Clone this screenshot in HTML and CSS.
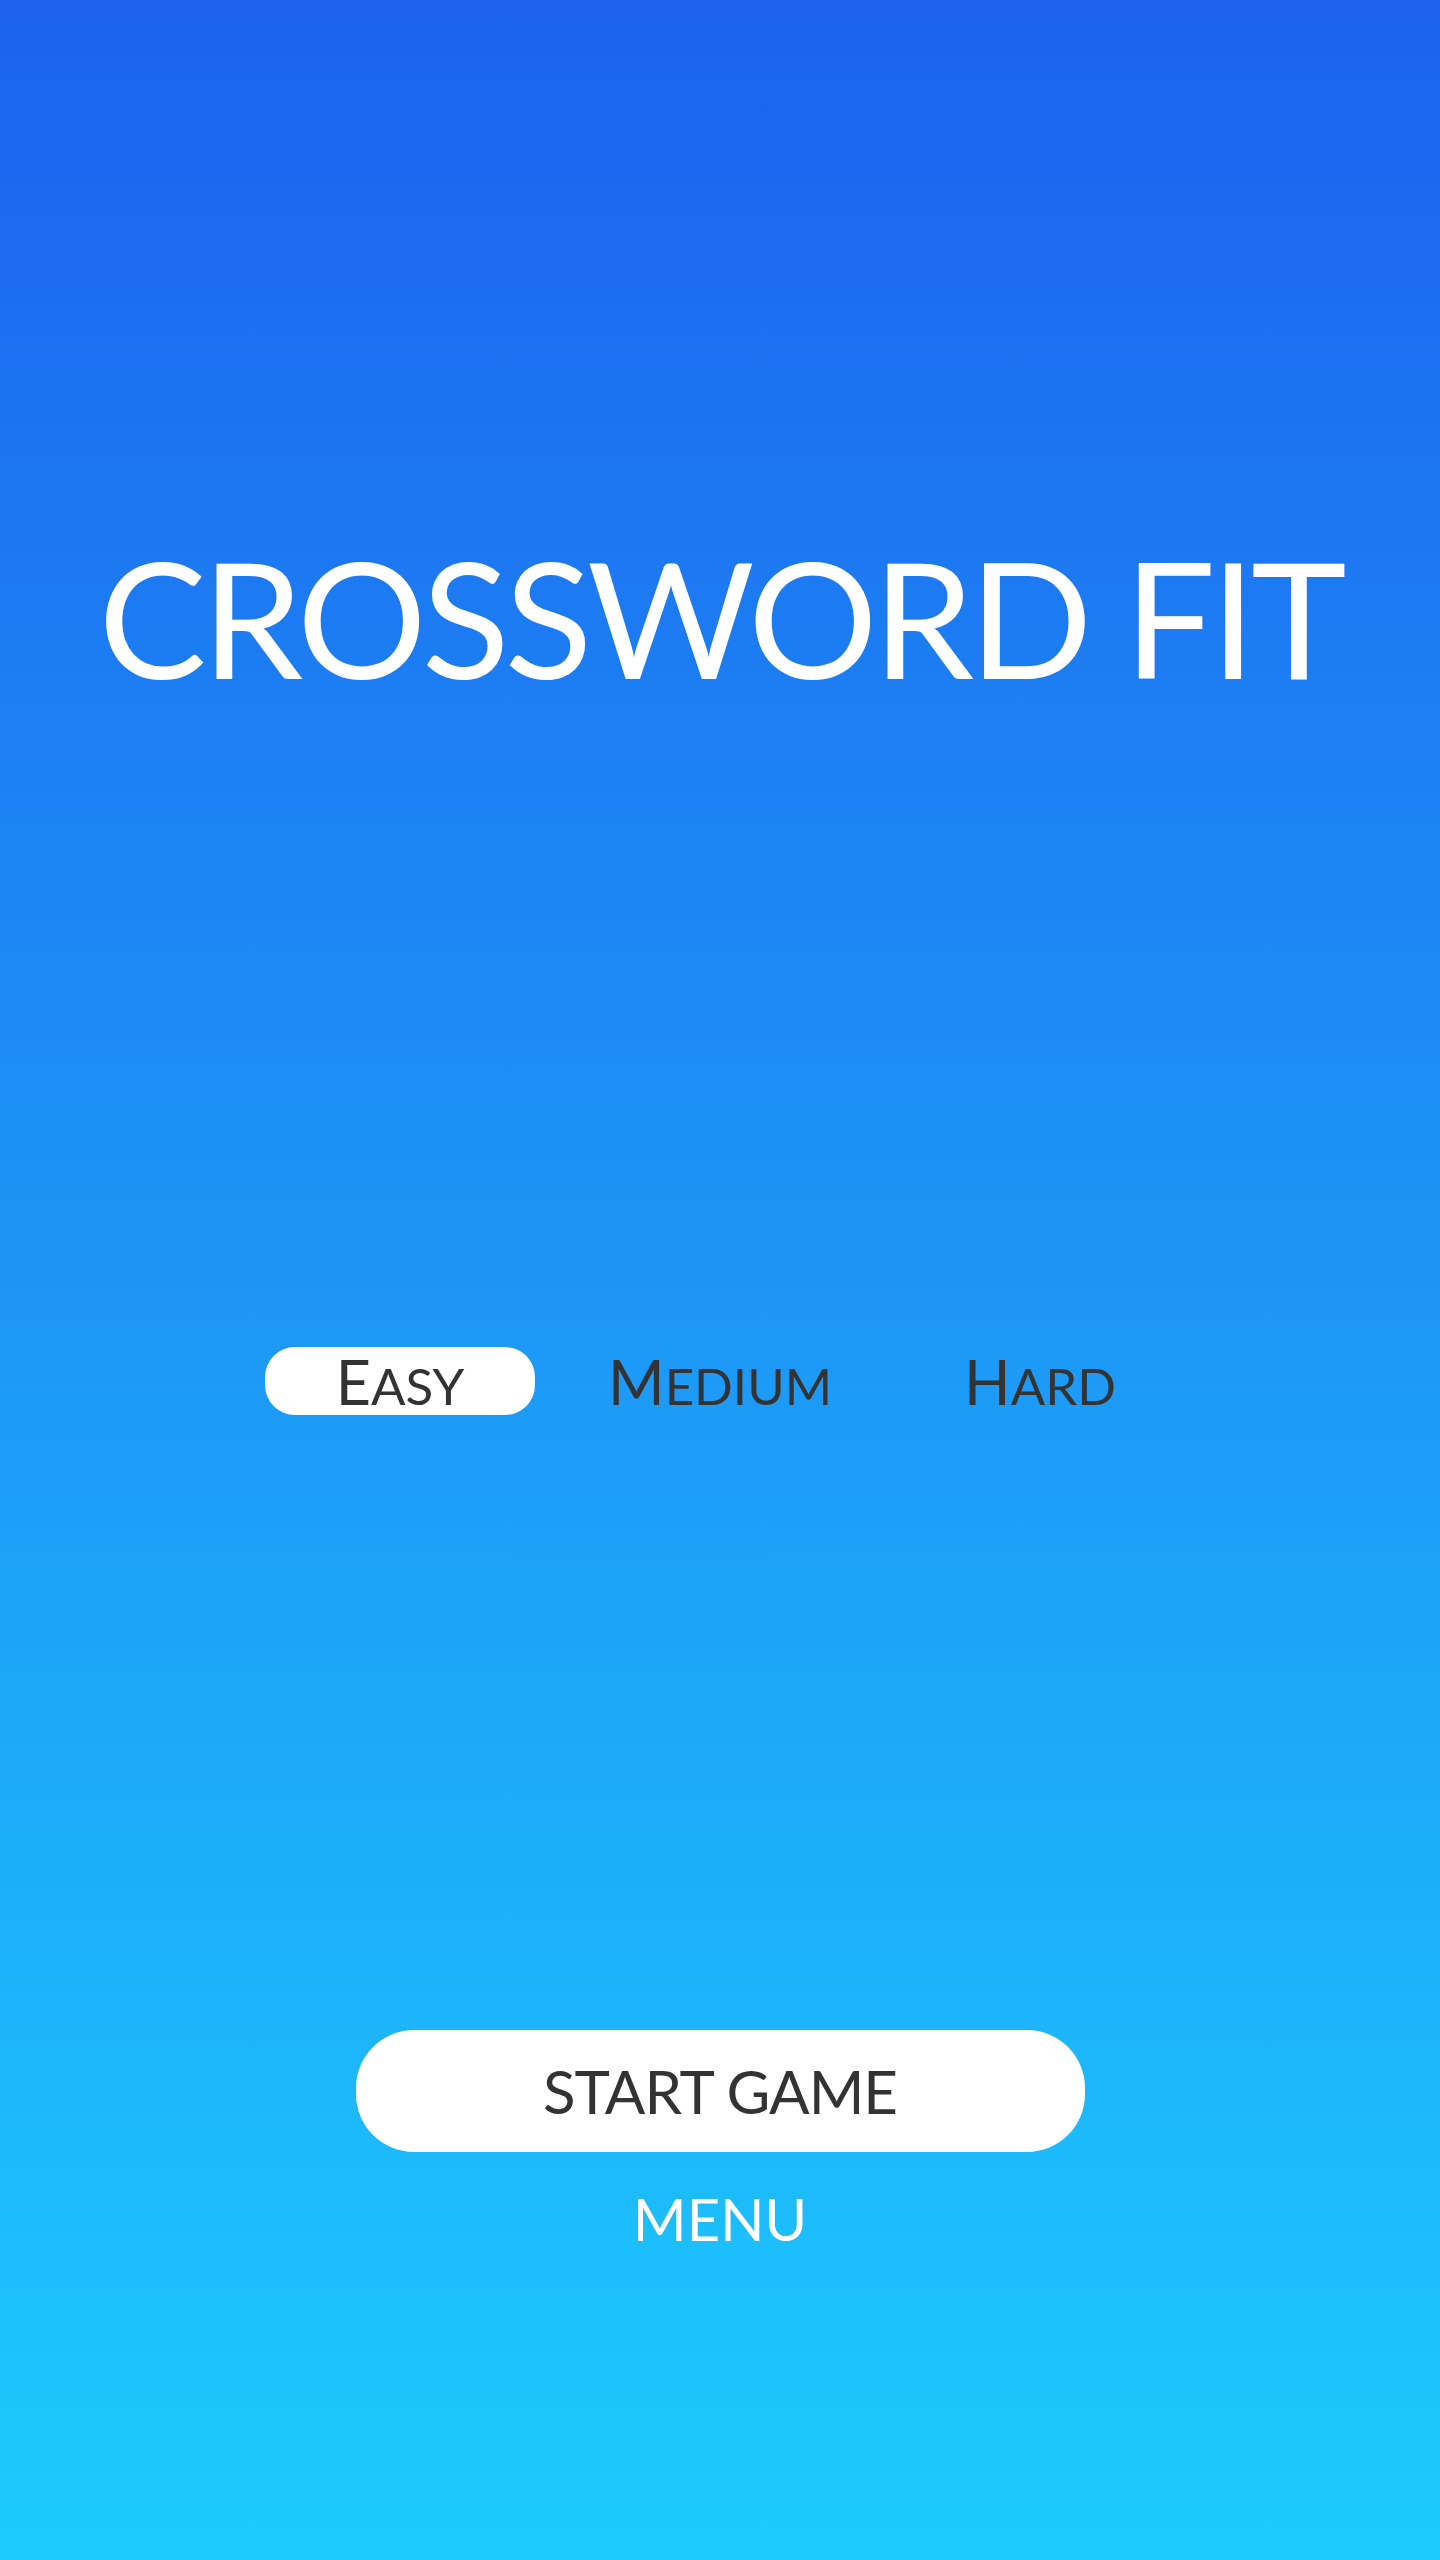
FILE: index.html
```html
<!DOCTYPE html>
<html lang="en">
  <head>
    <meta charset="UTF-8" />
    <meta name="viewport" content="width=device-width, initial-scale=1.0" />
    <title>Crossword Fit</title>
    <link rel="stylesheet" href="styles.css">
  </head>
  <body>
    <main class="screen">
      <h1 class="title">CROSSWORD FIT</h1>

      <div class="levels">
        <button class="level active"><span class="cap">E</span>asy</button>
        <button class="level"><span class="cap">M</span>edium</button>
        <button class="level"><span class="cap">H</span>ard</button>
      </div>

      <button class="start">START GAME</button>
      <a class="menu" href="#">MENU</a>
    </main>
  </body>
</html>
```

FILE: styles.css
```css
html,
body {
  margin: 0;
  padding: 0;
}
body {
  min-height: 2560px;
  background: linear-gradient(180deg, #1c62ef 0%, #1c96f6 50%, #1ccbfd 100%);
  font-family: "Lato", "Open Sans", sans-serif;
  color: #333;
}
.screen {
  display: flex;
  flex-direction: column;
  align-items: center;
  padding-top: 536px;
}
.title {
  margin: 0;
  font-size: 162px;
  line-height: 1;
  font-weight: 400;
  color: #fff;
  letter-spacing: -5px;
}
.levels {
  display: flex;
  margin-top: 649px;
}
.level {
  width: 270px;
  height: 68px;
  margin: 0 25px;
  border: none;
  border-radius: 30px;
  background: transparent;
  font-family: inherit;
  font-size: 51px;
  line-height: 1;
  text-transform: uppercase;
  color: #333;
  cursor: pointer;
}
.level .cap {
  font-size: 61px;
}
.level.active {
  background: #fff;
}
.start {
  width: 729px;
  height: 122px;
  margin-top: 615px;
  border: none;
  border-radius: 58px;
  background: #fff;
  font-family: inherit;
  font-size: 60px;
  letter-spacing: -1px;
  color: #333;
  cursor: pointer;
}
.menu {
  margin-top: 38px;
  font-size: 58px;
  line-height: 1;
  color: #fff;
  text-decoration: none;
}
```
